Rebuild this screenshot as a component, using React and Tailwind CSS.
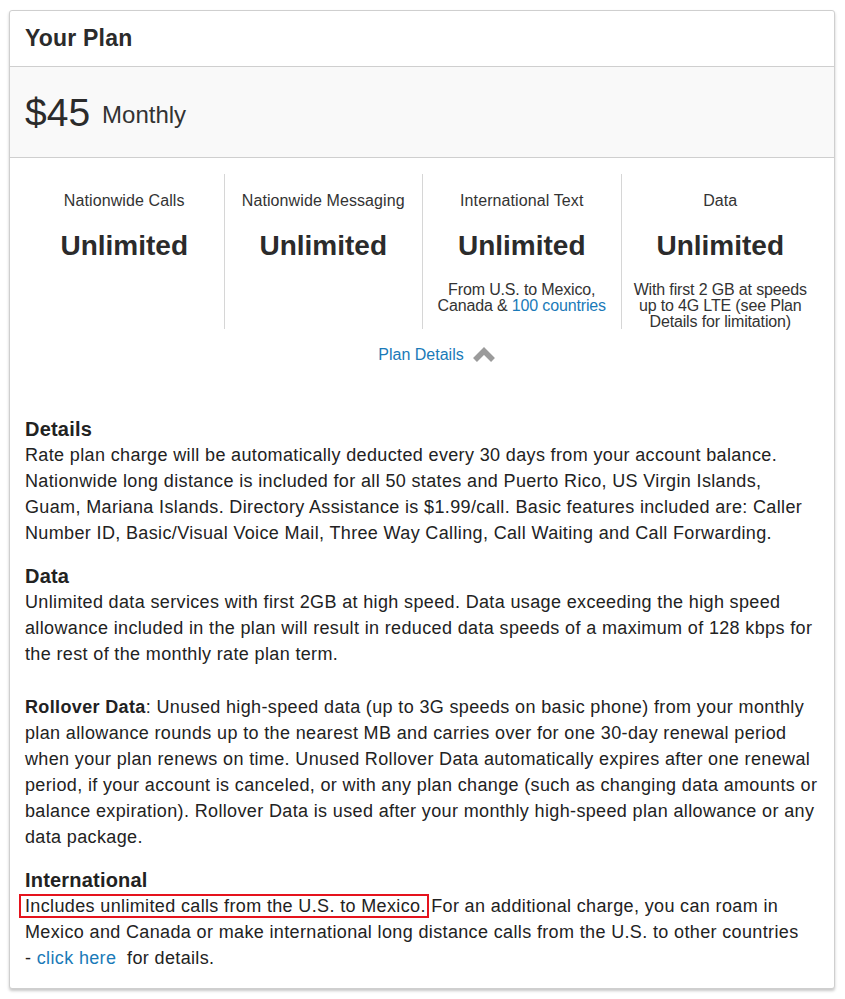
import React from 'react';

const columns = [
  { id: 1, label: 'Nationwide Calls', value: 'Unlimited' },
  { id: 2, label: 'Nationwide Messaging', value: 'Unlimited' },
  {
    id: 3,
    label: 'International Text',
    value: 'Unlimited',
    note: (
      <>
        From U.S. to Mexico,
        <br />
        Canada &amp; <a className="text-[#1a7ab8]">100 countries</a>
      </>
    ),
  },
  {
    id: 4,
    label: 'Data',
    value: 'Unlimited',
    note: (
      <>
        With first 2 GB at speeds
        <br />
        up to 4G LTE (see Plan
        <br />
        Details for limitation)
      </>
    ),
  },
];

const ChevronUp = () => (
  <svg width="24" height="16" viewBox="0 0 24 16" className="inline-block ml-[8px] -mt-[4px] align-middle">
    <polyline points="3,14 12,5 21,14" fill="none" stroke="#9b9b9b" strokeWidth="5.5" strokeLinejoin="miter" />
  </svg>
);

const App = () => {
  return (
    <div className="bg-white min-h-[999px] pt-[10px] pl-[9px] pr-[10px] text-[#333]" style={{ fontFamily: '"Liberation Sans", Arial, sans-serif' }}>
      <div className="border border-[#cfcfcf] rounded-[3px] shadow-[0_2px_3px_rgba(0,0,0,0.22)] bg-white">
        {/* Header */}
        <div className="h-[55px] flex items-center px-[15px]">
          <h1 className="text-[23px] font-bold text-[#2b2b2b] tracking-[0.2px]">Your Plan</h1>
        </div>

        {/* Price band */}
        <div className="h-[92px] bg-[#f9f9f9] border-y border-[#cfcfcf] flex items-center px-[15px]">
          <span className="text-[39px] leading-none text-[#2b2b2b]">$45</span>
          <span className="text-[24px] leading-none ml-[12px] mt-[6px] text-[#333]">Monthly</span>
        </div>

        {/* Plan features */}
        <div className="px-[15px]">
          <div className="grid grid-cols-4 mt-[16px]">
            {columns.map((col, i) => (
              <div
                key={col.id}
                className={`h-[155px] pt-[17px] text-center ${i > 0 ? 'border-l border-[#d6d6d6]' : ''}`}
              >
                <p className="text-[16px] leading-[20px] text-[#333] tracking-[0.1px]">{col.label}</p>
                <p className="text-[28px] leading-[34px] font-bold mt-[18px] text-[#2b2b2b]">{col.value}</p>
                {col.note && (
                  <p className="text-[16px] leading-[16px] mt-[19px] tracking-[-0.15px] text-[#333]">{col.note}</p>
                )}
              </div>
            ))}
          </div>

          <div className="text-center mt-[16px] leading-[20px] pl-[30px]">
            <a className="text-[16px] text-[#1a7ab8]">Plan Details</a>
            <ChevronUp />
          </div>

          {/* Details text */}
          <div className="mt-[51px] -mr-[4px] text-[18px] leading-[26px] text-[#222] tracking-[0.36px] pb-[17px]">
            <h2 className="text-[20px] font-bold leading-[26px] tracking-[0.2px]">Details</h2>
            <p>
              Rate plan charge will be automatically deducted every 30 days from your account balance. Nationwide long distance is included for all 50 states and Puerto Rico, US Virgin Islands,
              <br />
              Guam, Mariana Islands. Directory Assistance is $1.99/call. Basic features included are: Caller Number ID, Basic/Visual Voice Mail, Three Way Calling, Call Waiting and Call Forwarding.
            </p>

            <h2 className="text-[20px] font-bold leading-[26px] mt-[17px] tracking-[0.2px]">Data</h2>
            <p>
              Unlimited data services with first 2GB at high speed. Data usage exceeding the high speed allowance included in the plan will result in reduced data speeds of a maximum of 128 kbps for the rest of the monthly rate plan term.
            </p>
            <p className="mt-[27px]">
              <b>Rollover Data</b>: Unused high-speed data (up to 3G speeds on basic phone) from your monthly plan allowance rounds up to the nearest MB and carries over for one 30-day renewal period when your plan renews on time. Unused Rollover Data automatically expires after one renewal period, if your account is canceled, or with any plan change (such as changing data amounts or balance expiration). Rollover Data is used after your monthly high-speed plan allowance or any data package.
            </p>

            <h2 className="text-[20px] font-bold leading-[26px] mt-[17px] tracking-[0.2px]">International</h2>
            <p>
              <span className="relative">
                Includes unlimited calls from the U.S. to Mexico.
                <span className="absolute -left-[6px] -right-[3px] -top-[2px] -bottom-[2px] border-2 border-[#e5131d]"></span>
              </span>{' '}
              For an additional charge, you can roam in Mexico and Canada or make international long distance calls from the U.S. to other countries
              <br />- <a className="text-[#1a7ab8]">click here</a>&nbsp; for details.
            </p>
          </div>
        </div>
      </div>
    </div>
  );
};

export default App;
